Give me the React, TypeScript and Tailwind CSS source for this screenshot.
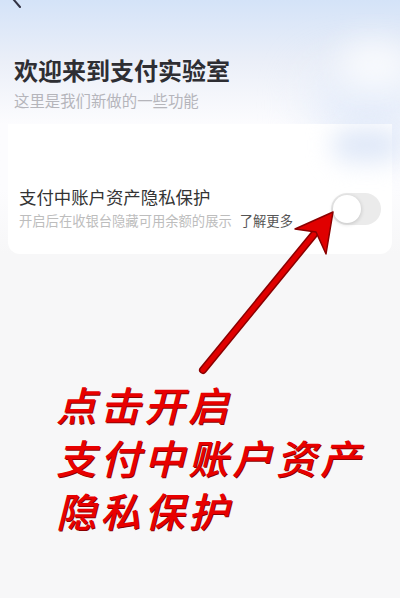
import { useState } from "react";

function Toggle() {
  const [on, setOn] = useState(false);
  return (
    <button
      onClick={() => setOn(!on)}
      className={`relative w-[50px] h-[32px] rounded-full shrink-0 ${on ? "bg-[#1677ff]" : "bg-[#ebebeb]"}`}
    >
      <span
        className={`absolute top-[2px] w-[28px] h-[28px] rounded-full bg-white shadow-[0_1px_4px_rgba(0,0,0,0.18)] ${on ? "left-[20px]" : "left-[2px]"}`}
      />
    </button>
  );
}

function App() {
  return (
    <div className="relative w-[400px] h-[598px] overflow-hidden bg-[#f7f7f8] font-['Noto_Sans_CJK_SC','Noto_Sans',sans-serif]">
      {/* header */}
      <div className="relative h-[124px] bg-gradient-to-b from-[#d4e3f8] via-[#ebeff8] to-[#fcfcfe] px-[14px]">
        <div className="absolute right-[-30px] top-[70px] w-[120px] h-[70px] rounded-full bg-[#e4ecfa] blur-xl" />
        <div className="absolute right-[-10px] top-[40px] w-[70px] h-[50px] rounded-full bg-white/70 blur-lg" />
        <svg className="absolute left-[10px] top-[-8px]" width="14" height="16" viewBox="0 0 14 16">
          <path d="M10 1 L4 8 L10 15" stroke="#334" strokeWidth="2" fill="none" strokeLinecap="round" />
        </svg>
        <div className="relative pt-[55px]">
          <h1 className="text-[24px] leading-[30px] font-bold text-[#2e2e33]">欢迎来到支付实验室</h1>
          <p className="mt-[5px] text-[15.4px] leading-[20px] text-[#b5b5bb]">这里是我们新做的一些功能</p>
        </div>
      </div>

      {/* feature card */}
      <div className="bg-gradient-to-b from-[#fcfcfe] via-[#fcfcfe] to-[#f7f7f8]">
        <div className="relative mx-2 rounded-b-xl bg-white pt-[61px] pb-[24px] px-[11px]">
          <div className="absolute right-[-10px] top-[4px] w-[70px] h-[34px] rounded-full bg-[#dfe8f8] blur-md" />
          <div className="relative flex items-center justify-between">
            <div>
              <div className="text-[17.4px] leading-[24px] text-[#333]">支付中账户资产隐私保护</div>
              <div className="mt-[3px] text-[13.3px] leading-[18px] text-[#bdbdbd]">
                开启后在收银台隐藏可用余额的展示
                <span className="ml-2 text-[#555]">了解更多</span>
              </div>
            </div>
            <div className="mt-[8px]">
              <Toggle />
            </div>
          </div>
        </div>
      </div>

      {/* annotation */}
      <div className="mt-[124px] pl-[56px] text-[40px] leading-[53px] font-medium italic tracking-[4px] text-[#e80000] [text-shadow:1px_1px_0_#8a0000]">
        <div>点击开启</div>
        <div>支付中账户资产</div>
        <div>隐私保护</div>
      </div>

      <svg className="absolute inset-0 pointer-events-none" width="400" height="598" viewBox="0 0 400 598">
        <line x1="203" y1="370" x2="320" y2="227" stroke="#8a0000" strokeWidth="8" strokeLinecap="round" />
        <line x1="203" y1="370" x2="320" y2="227" stroke="#e00000" strokeWidth="5" strokeLinecap="round" />
        <polygon points="333,212 295,229 316,232 326,254" fill="#e00000" stroke="#8a0000" strokeWidth="1.5" strokeLinejoin="round" />
      </svg>
    </div>
  );
}

export default App;
